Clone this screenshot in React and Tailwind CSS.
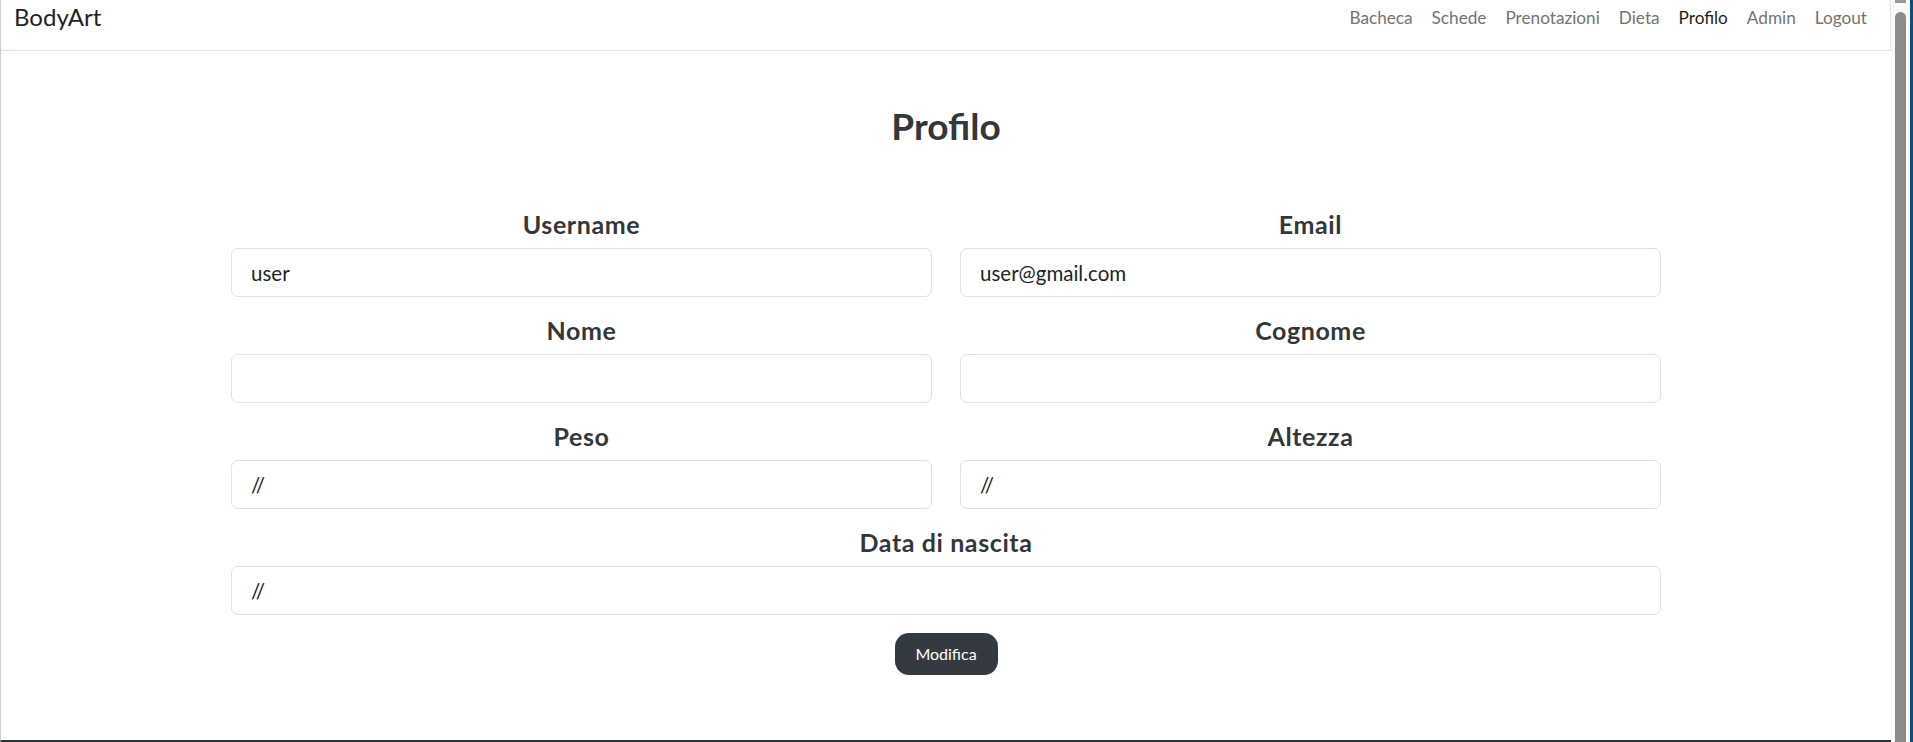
export default function App() {
  const links = ["Bacheca", "Schede", "Prenotazioni", "Dieta", "Profilo", "Admin", "Logout"];
  const Field = ({ label, value, full }) => (
    <div className={full ? "col-span-2 flex flex-col" : "flex flex-col"}>
      <label className="mb-[9px] block text-center text-[25px] font-bold leading-[29px] tracking-[0.6px] text-[#33373c]">{label}</label>
      <input
        readOnly
        value={value}
        className="h-[49px] w-full rounded-[7px] border border-[#dee2e6] bg-white px-[19px] text-[20.5px] text-[#212529] outline-none"
      />
    </div>
  );
  return (
    <div className="flex h-[742px] w-full overflow-hidden bg-white font-['Lato','Noto_Sans',sans-serif]">
      <div className="flex w-[1891px] shrink-0 flex-col border-b-2 border-l border-b-[#2f3337] border-l-[#c8d0da]">
        <nav className="flex h-[51px] shrink-0 items-start justify-between border-b border-r border-[#dee2e6] pl-[13px] pr-[23px]">
          <span className="mt-[2px] text-[24px] leading-[30px] text-[#1f2326]">BodyArt</span>
          <ul className="mt-[6px] flex gap-[19px] text-[17.2px] leading-[24px]">
            {links.map((l) => (
              <li key={l} className={l === "Profilo" ? "text-[#1d1d1d]" : "text-[#737373]"}>
                {l}
              </li>
            ))}
          </ul>
        </nav>
        <main className="flex flex-1 flex-col items-center">
          <h1 className="mt-[53px] text-[37px] font-bold leading-[44px] text-[#33373c]">Profilo</h1>
          <form className="mt-[62px] grid w-[1430px] grid-cols-2 gap-x-[28px] gap-y-[19px]">
            <Field label="Username" value="user" />
            <Field label="Email" value="user@gmail.com" />
            <Field label="Nome" value="" />
            <Field label="Cognome" value="" />
            <Field label="Peso" value="//" />
            <Field label="Altezza" value="//" />
            <Field label="Data di nascita" value="//" full />
          </form>
          <button
            type="button"
            className="mt-[18px] h-[42px] w-[103px] rounded-[14px] bg-[#343a40] text-[16px] text-white"
          >
            Modifica
          </button>
        </main>
      </div>
      <div className="flex w-[19px] shrink-0 flex-col items-start bg-[#fafafa]">
        <div className="ml-[4px] h-[3px] w-[11px] bg-[#9a9a9a]" />
        <div className="ml-[4px] mt-[9px] w-[11px] flex-1 rounded-t-full bg-[#8b8b8b]" />
      </div>
      <div className="w-[3px] shrink-0 bg-[#0f4c81]" />
    </div>
  );
}
